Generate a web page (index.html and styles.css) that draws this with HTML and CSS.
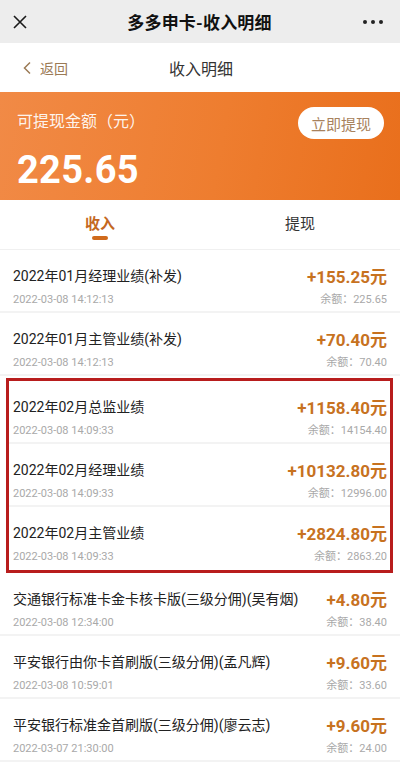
FILE: index.html
```html
<!DOCTYPE html>
<html lang="zh">
<head>
<meta charset="utf-8">
<title>多多申卡-收入明细</title>
<link rel="stylesheet" href="styles.css">
</head>
<body>
<div class="page">
  <header class="topbar">
    <svg class="close" width="16" height="16" viewBox="0 0 16 16"><path d="M2 2 L14 14 M14 2 L2 14" stroke="#1a1a1a" stroke-width="1.6" fill="none"/></svg>
    <div class="topbar-title">多多申卡-收入明细</div>
    <div class="dots"><span></span><span></span><span></span></div>
  </header>
  <nav class="navbar">
    <div class="back">
      <svg width="10" height="14" viewBox="0 0 10 14"><path d="M8 1.5 L2.5 7 L8 12.5" stroke="#9b7a55" stroke-width="1.5" fill="none"/></svg>
      <span>返回</span>
    </div>
    <div class="nav-title">收入明细</div>
  </nav>
  <section class="banner">
    <div class="banner-top">
      <div class="banner-label">可提现金额（元）</div>
      <div class="withdraw-btn">立即提现</div>
    </div>
    <div class="banner-amount">225.65</div>
  </section>
  <div class="tabs">
    <div class="tab active">收入<i></i></div>
    <div class="tab">提现</div>
  </div>
  <div class="list">
    <div class="row">
      <div class="row-main"><div class="row-title">2022年01月经理业绩(补发)</div><div class="row-amount">+155.25元</div></div>
      <div class="row-sub"><div>2022-03-08 14:12:13</div><div>余额：225.65</div></div>
    </div>
    <div class="row">
      <div class="row-main"><div class="row-title">2022年01月主管业绩(补发)</div><div class="row-amount">+70.40元</div></div>
      <div class="row-sub"><div>2022-03-08 14:12:13</div><div>余额：70.40</div></div>
    </div>
    <div class="highlight">
      <div class="row">
        <div class="row-main"><div class="row-title">2022年02月总监业绩</div><div class="row-amount">+1158.40元</div></div>
        <div class="row-sub"><div>2022-03-08 14:09:33</div><div>余额：14154.40</div></div>
      </div>
      <div class="row">
        <div class="row-main"><div class="row-title">2022年02月经理业绩</div><div class="row-amount">+10132.80元</div></div>
        <div class="row-sub"><div>2022-03-08 14:09:33</div><div>余额：12996.00</div></div>
      </div>
      <div class="row">
        <div class="row-main"><div class="row-title">2022年02月主管业绩</div><div class="row-amount">+2824.80元</div></div>
        <div class="row-sub"><div>2022-03-08 14:09:33</div><div>余额：2863.20</div></div>
      </div>
    </div>
    <div class="row">
      <div class="row-main"><div class="row-title">交通银行标准卡金卡核卡版(三级分佣)(吴有烟)</div><div class="row-amount">+4.80元</div></div>
      <div class="row-sub"><div>2022-03-08 12:34:00</div><div>余额：38.40</div></div>
    </div>
    <div class="row">
      <div class="row-main"><div class="row-title">平安银行由你卡首刷版(三级分佣)(孟凡辉)</div><div class="row-amount">+9.60元</div></div>
      <div class="row-sub"><div>2022-03-08 10:59:01</div><div>余额：33.60</div></div>
    </div>
    <div class="row">
      <div class="row-main"><div class="row-title">平安银行标准金首刷版(三级分佣)(廖云志)</div><div class="row-amount">+9.60元</div></div>
      <div class="row-sub"><div>2022-03-07 21:30:00</div><div>余额：24.00</div></div>
    </div>
  </div>
</div>
</body>
</html>
```

FILE: styles.css
```css
* { box-sizing: border-box; }
html, body { margin: 0; padding: 0; }
body {
  width: 400px;
  height: 773px;
  overflow: hidden;
  background: #fff;
  font-family: Roboto, "Noto Sans CJK SC", sans-serif;
  color: #222;
}
.page { display: flex; flex-direction: column; }

.topbar {
  height: 43px;
  background: #ededed;
  display: flex;
  align-items: center;
  justify-content: space-between;
  padding: 0 17px 0 12px;
}
.close { display: block; }
.topbar-title {
  font-size: 17px;
  font-weight: 700;
  color: #111;
  letter-spacing: 0.2px;
  margin-left: 8px;
}
.dots { display: flex; gap: 4px; }
.dots span { width: 4px; height: 4px; border-radius: 50%; background: #222; }

.navbar {
  height: 49px;
  background: #fff;
  display: grid;
  grid-template-columns: 1fr auto 1fr;
  align-items: center;
  padding: 0 20px 0 22px;
}
.back { display: flex; align-items: center; gap: 8px; color: #9b7a55; font-size: 14px; }
.back svg { display: block; }
.nav-title { font-size: 16px; color: #333; }

.banner {
  height: 108px;
  background: linear-gradient(100deg, #f18a46 0%, #ee7d2f 55%, #e96f1c 100%);
  padding: 15px 16px 0 17px;
  color: #fff;
}
.banner-top { display: flex; justify-content: space-between; align-items: flex-start; }
.banner-label { font-size: 16px; line-height: 22px; margin-top: 4px; color: rgba(255,255,255,0.92); }
.withdraw-btn {
  width: 86px;
  height: 32px;
  border-radius: 16px;
  background: #fff;
  color: #a8825d;
  font-size: 15px;
  display: flex;
  align-items: center;
  justify-content: center;
}
.banner-amount {
  font-size: 38px;
  font-weight: 700;
  line-height: 1;
  margin-top: 12px;
  letter-spacing: 0.3px;
}

.tabs {
  height: 50px;
  display: flex;
  border-bottom: 1px solid #f0f0f0;
}
.tab {
  flex: 1;
  text-align: center;
  font-size: 15px;
  color: #333;
  padding-top: 12px;
  position: relative;
}
.tab.active { color: #c4681f; font-weight: 700; }
.tab.active i {
  position: absolute;
  left: 50%;
  top: 36px;
  width: 16px;
  height: 4px;
  margin-left: -8px;
  border-radius: 2px;
  background: #d06a1c;
}

.list { display: flex; flex-direction: column; }
.row {
  height: 63px;
  padding: 14px 13px 0;
  border-bottom: 2px solid #f3f3f3;
  display: flex;
  flex-direction: column;
  gap: 7px;
}
.row-main { display: flex; justify-content: space-between; align-items: center; height: 22px; }
.row-title { font-size: 14px; color: #222; white-space: nowrap; }
.row-amount { font-size: 17px; font-weight: 700; color: #c7721f; white-space: nowrap; }
.row-sub {
  display: flex;
  justify-content: space-between;
  font-size: 11px;
  color: #a9a9a9;
  line-height: 14px;
}

.highlight {
  margin: 2px 7px 0 6px;
  border: 3px solid #b81d1d;
}
.highlight .row { padding: 14px 3px 0 4px; }
.highlight .row:last-child { border-bottom: none; }
```
